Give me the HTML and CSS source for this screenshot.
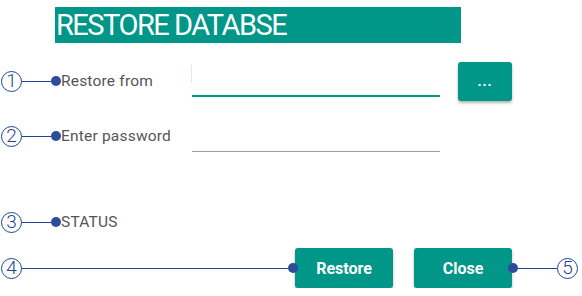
FILE: index.html
```html
<!DOCTYPE html>
<html lang="en">
<head>
    <meta charset="UTF-8">
    <title>Restore database</title>
    <link rel="stylesheet" href="styles.css">
</head>
<body>
<div class="dialog">
    <h1 class="title">RESTORE DATABSE</h1>

    <div class="row row-source">
        <div class="callout">
            <span class="num">1</span><span class="line"></span><span class="dot"></span>
        </div>
        <label class="label">Restore from</label>
        <div class="field focused"><input type="text"></div>
        <button class="btn btn-browse">...</button>
    </div>

    <div class="row row-password">
        <div class="callout">
            <span class="num">2</span><span class="line"></span><span class="dot"></span>
        </div>
        <label class="label">Enter password</label>
        <div class="field"><input type="password"></div>
    </div>

    <div class="row row-status">
        <div class="callout">
            <span class="num">3</span><span class="line"></span><span class="dot"></span>
        </div>
        <span class="label">STATUS</span>
    </div>

    <div class="row row-actions">
        <div class="callout callout-long">
            <span class="num">4</span><span class="line"></span><span class="dot dot-left"></span>
        </div>
        <button class="btn btn-action">Restore</button>
        <button class="btn btn-action btn-close">Close</button>
        <div class="callout callout-right">
            <span class="dot dot-right"></span><span class="line"></span><span class="num">5</span>
        </div>
    </div>
</div>
</body>
</html>
```

FILE: styles.css
```css
body {
    margin: 0;
    font-family: Roboto, "Liberation Sans", sans-serif;
    background: #fff;
}

.dialog {
    width: 582px;
    padding-left: 1px;
    box-sizing: border-box;
}

.title {
    margin: 7px 0 0 54px;
    width: 406px;
    height: 36px;
    padding-left: 1px;
    box-sizing: border-box;
    background: #009688;
    color: #fff;
    font-size: 29px;
    font-weight: 400;
    line-height: 36px;
    letter-spacing: -1.5px;
}

.row {
    display: flex;
    align-items: center;
    height: 40px;
}

.row-source {
    margin-top: 18px;
}

.row-password {
    margin-top: 15px;
}

.row-status {
    margin-top: 46px;
}

.row-actions {
    margin-top: 6px;
}

/* annotation markers */
.callout {
    display: flex;
    align-items: center;
    width: 60px;
    flex: 0 0 60px;
}

.callout-long {
    flex: 1 1 0;
}

.callout-right {
    flex: 0 0 70px;
    width: 70px;
    margin-left: -4px;
    margin-right: 4px;
}

.num {
    width: 21px;
    height: 21px;
    flex: 0 0 21px;
    box-sizing: border-box;
    border: 1.5px solid #1c4595;
    border-radius: 50%;
    color: #1c4595;
    font-size: 19px;
    font-weight: 300;
    line-height: 18px;
    text-align: center;
}

.line {
    flex: 1 1 0;
    height: 1px;
    background: #1c4595;
}

.dot {
    width: 10px;
    height: 10px;
    flex: 0 0 10px;
    border-radius: 50%;
    background: #2c4e98;
    position: relative;
    z-index: 1;
}

.dot-left {
    margin-right: -3px;
}

.label {
    width: 131px;
    flex: 0 0 131px;
    color: #555;
    font-size: 15.5px;
    letter-spacing: 0.2px;
}

.field {
    width: 248px;
    height: 32px;
    box-sizing: border-box;
    border-bottom: 1px solid #9e9e9e;
    position: relative;
}

.field input {
    width: 100%;
    height: 100%;
    border: 0;
    outline: 0;
    padding: 0;
    background: transparent;
}

.field.focused {
    border-bottom: 2px solid #009688;
}

.field.focused::before {
    content: "";
    position: absolute;
    left: -1px;
    top: 0;
    width: 1px;
    height: 18px;
    background: #d6efec;
}

.btn {
    border: 0;
    border-radius: 3px;
    background: #009688;
    color: #fff;
    font-family: Roboto, "Liberation Sans", sans-serif;
    font-weight: 700;
    font-size: 16px;
    box-shadow: 0 2px 3px rgba(0, 0, 0, 0.3);
    cursor: pointer;
}

.btn-browse {
    margin-left: 18px;
    width: 54px;
    height: 39px;
    font-size: 14px;
    letter-spacing: 1px;
}

.btn-action {
    width: 98px;
    height: 40px;
}

.btn-close {
    margin-left: 21px;
}
```
